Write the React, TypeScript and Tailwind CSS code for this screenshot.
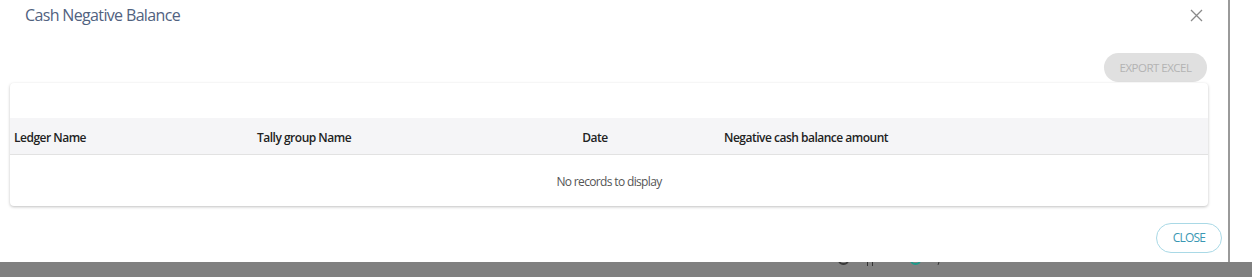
import React from "react";

export default function App() {
  const font = { fontFamily: '"Open Sans", "Liberation Sans", sans-serif' };
  return (
    <div className="w-[1252px] h-[277px] flex flex-col bg-white overflow-hidden" style={font}>
      <div className="flex h-[262px]">
        <div className="w-[1228px] h-full bg-white flex flex-col">
          <div className="h-[30px] flex items-center justify-between pl-[25px] pr-[25px]">
            <span className="text-[16px] text-[#51627f] tracking-[-0.65px]">Cash Negative Balance</span>
            <svg width="13" height="13" viewBox="0 0 13 13" className="text-[#8a8a8a]">
              <path d="M1 1L12 12M12 1L1 12" stroke="currentColor" strokeWidth="1.3" fill="none" />
            </svg>
          </div>
          <div className="flex justify-end pr-[21px] mt-[23px]">
            <button className="w-[103px] h-[29px] rounded-full bg-[#e0e0e0] text-[#b3b3b3] text-[11.5px] tracking-[-0.5px] uppercase">
              Export Excel
            </button>
          </div>
          <div className="ml-[10px] mr-[20px] mt-[1px] h-[123px] bg-white rounded-[4px] shadow-[0_1px_3px_rgba(0,0,0,0.25)] flex flex-col overflow-hidden">
            <div className="h-[35px]" />
            <div className="h-[37px] pt-[3px] bg-[#f5f5f7] border-b border-[#e2e2e2] grid grid-cols-[243px_237px_210px_1fr] items-center text-[12px] font-semibold text-[#222] tracking-[-0.5px]">
              <div className="pl-[4px]">Ledger Name</div>
              <div className="pl-[4px]">Tally group Name</div>
              <div className="text-center">Date</div>
              <div className="pl-[24px]">Negative cash balance amount</div>
            </div>
            <div className="flex-1 flex items-center justify-center pt-[2px] text-[12px] text-[#555] tracking-[-0.65px]">
              No records to display
            </div>
          </div>
          <div className="flex justify-end pr-[6px] mt-[17px]">
            <button className="w-[66px] h-[30px] rounded-full border border-[#a9d9e6] text-[#3a97b3] text-[12px] tracking-[-0.8px]">
              CLOSE
            </button>
          </div>
        </div>
        <div className="w-[2px] h-full bg-[#9a9a9a]" />
        <div className="flex-1 h-full bg-white" />
      </div>
      <div className="h-[15px] bg-[#808080] relative overflow-hidden">
        <div className="absolute left-[838px] top-[-7px] w-[11px] h-[10px] rounded-full border-2 border-[#3a3a3a]" />
        <div className="absolute left-[867px] top-[0px] w-[1px] h-[4px] bg-[#333]" />
        <div className="absolute left-[872px] top-[0px] w-[1px] h-[4px] bg-[#333]" />
        <div className="absolute left-[910px] top-[-7px] w-[11px] h-[10px] rounded-full border-2 border-[#1f9a8a]" />
        <div className="absolute left-[938px] top-[0px] w-[1px] h-[3px] bg-[#333] rotate-[20deg]" />
      </div>
    </div>
  );
}
